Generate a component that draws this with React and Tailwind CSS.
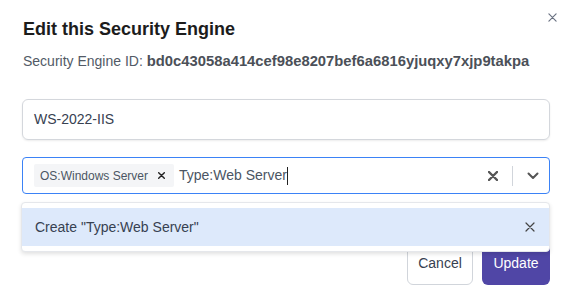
import React from 'react'

function XIcon({ className, strokeWidth = 1.5 }) {
  return (
    <svg viewBox="0 0 10 10" className={className} fill="none" stroke="currentColor" strokeWidth={strokeWidth} strokeLinecap="round">
      <path d="M1 1L9 9M9 1L1 9" />
    </svg>
  )
}

export default function App() {
  return (
    <div className="relative w-[572px] h-[299px] overflow-hidden bg-white [font-family:'Liberation_Sans',Arial,sans-serif]">
      <button className="absolute right-[15px] top-[13px] text-gray-500">
        <XIcon className="w-[9px] h-[9px]" strokeWidth={1.3} />
      </button>

      <div className="px-[22px] pt-[18px]">
        <h2 className="text-[18px] leading-[22px] font-bold text-[#1c1c1c] pl-px">Edit this Security Engine</h2>
        <p className="mt-[13px] text-[14px] leading-[16px] text-[#525a66] pl-px">
          Security Engine ID: <span className="font-bold text-[14.8px] text-[#4b5058]">bd0c43058a414cef98e8207bef6a6816yjuqxy7xjp9takpa</span>
        </p>

        <div className="mt-[30px] h-[41px] rounded-[6px] border border-[#d4d7dc] shadow-[0_1px_2px_rgba(0,0,0,0.08)] flex items-center px-[11px] text-[14px] text-[#374151]">
          WS-2022-IIS
        </div>

        <div className="relative mt-[17px] h-[37px] rounded-[4px] border border-[#3b82f6] flex items-center pl-[11px] pr-[10px]">
          <div className="h-[23px] w-[140px] bg-[#f4f5f7] rounded-[2px] flex items-center pl-[6px] text-[12px] text-[#4b5563]">
            <span>OS:Windows Server</span>
            <span className="ml-[10px] text-[#222]">
              <XIcon className="w-[7px] h-[7px]" strokeWidth={2} />
            </span>
          </div>
          <div className="ml-[5px] flex-1 flex items-center text-[14px] text-[#4b5563]">
            <span>Type:Web Server</span>
            <span className="w-px h-[18px] bg-[#222]"></span>
          </div>
          <div className="flex items-center text-[#555]">
            <XIcon className="w-[10px] h-[10px]" strokeWidth={2.4} />
            <span className="mx-[14px] w-px h-[20px] bg-[#d1d5db]"></span>
            <svg viewBox="0 0 12 8" className="w-[12px] h-[8px]" fill="none" stroke="currentColor" strokeWidth="2" strokeLinecap="round" strokeLinejoin="round">
              <path d="M1.5 1.5L6 6L10.5 1.5" />
            </svg>
          </div>

          <div className="absolute left-[-2px] right-[-1px] top-[44px] z-10 bg-white rounded-[4px] border border-[#e5e7eb] shadow-[0_2px_4px_rgba(0,0,0,0.12)] py-[5px]">
            <div className="h-[38px] bg-[#dde9fb] flex items-center justify-between pl-[13px] pr-[14px] text-[14px] text-[#374151]">
              <span>Create "Type:Web Server"</span>
              <XIcon className="w-[10px] h-[10px] text-[#444]" strokeWidth={1.2} />
            </div>
          </div>
        </div>

        <div className="mt-[47px] flex justify-end gap-[9px]">
          <button className="h-[44px] w-[66px] rounded-[6px] border border-[#d1d5db] bg-white text-[14px] text-[#374151]">Cancel</button>
          <button className="h-[44px] w-[68px] rounded-[6px] bg-[#5046a6] text-[14px] text-white">Update</button>
        </div>
      </div>
    </div>
  )
}
